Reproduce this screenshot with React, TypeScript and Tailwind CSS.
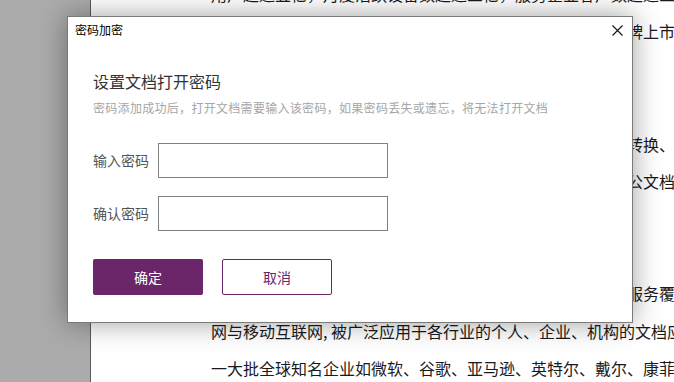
const FONT = 'font-["Noto_Sans_CJK_SC","Noto_Sans",sans-serif]';

// lines of the document page behind the dialog
const DOC_LINES: string[] = [
  '用户超过五亿，月度活跃设备数超过三亿，服务企业客户数超过三十万家，并持续增长',
  '北京金山办公软件股份有限公司，于二零一九年在科创板挂牌上市',
  '，成为国内办公软件领域的领先企业。',
  '',
  '产品能够提供文档的创建、编辑、协作、分享、存储、格式转换、打印等功能',
  '通过云端与本地文件相结合的方式，为用户提供更高效的办公文档生成与管理',
  '体验，让办公更简单。',
  '',
  '公司持续推进云与多屏协作战略，提供全平台的办公产品，服务覆盖互联',
  '网与移动互联网, 被广泛应用于各行业的个人、企业、机构的文档应用',
  '一大批全球知名企业如微软、谷歌、亚马逊、英特尔、戴尔、康菲石油',
];

function Field({ label }: { label: string }) {
  return (
    <div className="flex items-center">
      <span className="w-[65px] text-[14px] text-[#555]">{label}</span>
      <input
        type="password"
        className="w-[230px] h-[35px] border border-[#808080] bg-white outline-none px-2"
      />
    </div>
  );
}

export default function App() {
  return (
    <div className={`relative w-[674px] h-[382px] overflow-hidden flex bg-[#ababab] ${FONT}`}>
      {/* left gray area */}
      <div className="w-[90px] shrink-0 bg-[#ababab]" />

      {/* document page */}
      <div className="flex-1 bg-white border-l border-[#5a5a5a] overflow-hidden">
        <div className="-mt-[24px] pl-[120px]">
          {DOC_LINES.map((t, i) => (
            <div
              key={i}
              className="h-[37.4px] leading-[37.4px] text-[16px] text-[#1a1a1a] whitespace-nowrap"
            >
              {t}
            </div>
          ))}
        </div>
      </div>

      {/* dialog */}
      <div className="absolute left-[67px] top-[16px] w-[566px] h-[307px] bg-white border border-[#7a7a7a] shadow-[0_0_26px_rgba(0,0,0,0.38)] flex flex-col">
        <div className="h-[26px] flex items-center justify-between pl-[7px] pr-[9px]">
          <span className="text-[12px] text-black leading-[16px]">密码加密</span>
          <button className="w-[12px] h-[12px] flex items-center justify-center">
            <svg width="11" height="11" viewBox="0 0 11 11" fill="none" stroke="#111" strokeWidth="1.1">
              <path d="M0.5 0.5 L10.5 10.5 M10.5 0.5 L0.5 10.5" />
            </svg>
          </button>
        </div>

        <div className="pl-[25px] pt-[26px] flex flex-col">
          <h2 className="text-[16px] text-[#333] leading-[24px]">设置文档打开密码</h2>
          <p className="mt-[6px] text-[12px] text-[#a6a6a6] leading-[18px] tracking-[0.3px]">
            密码添加成功后，打开文档需要输入该密码，如果密码丢失或遗忘，将无法打开文档
          </p>

          <div className="mt-[26px] flex flex-col gap-[18px]">
            <Field label="输入密码" />
            <Field label="确认密码" />
          </div>

          <div className="mt-[28px] flex gap-[19px]">
            <button className="w-[110px] h-[36px] rounded-[2px] bg-[#6b2569] text-white text-[14px]">
              确定
            </button>
            <button className="w-[110px] h-[36px] rounded-[2px] border border-[#6b2569] bg-white text-[#6b2569] text-[14px]">
              取消
            </button>
          </div>
        </div>
      </div>
    </div>
  );
}
